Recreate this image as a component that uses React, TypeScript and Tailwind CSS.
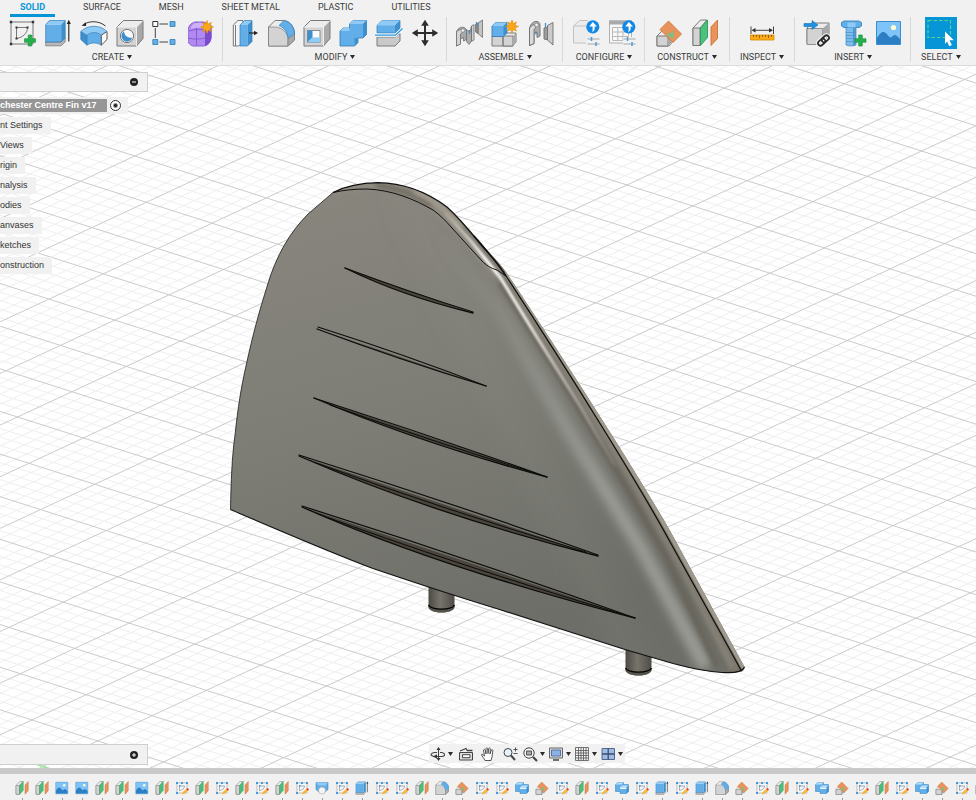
import type { ReactNode } from "react";

type IconProps = { className?: string };

const BLUE = "#62aee8";
const BLUE_TOP = "#8fcbf5";
const BLUE_SIDE = "#3d8fcd";
const BLUE_LINE = "#2f7cb8";
const GREY = "#d3d3d3";
const GREY_TOP = "#ececec";
const GREY_SIDE = "#a9a9a9";
const GREY_LINE = "#7a7a7a";

function Svg({ className = "size-7", children }: IconProps & { children: ReactNode }) {
  return (
    <svg viewBox="0 0 28 28" className={className} fill="none" aria-hidden="true">
      {children}
    </svg>
  );
}

function Burst({ x, y }: { x: number; y: number }) {
  return (
    <path
      transform={`translate(${x} ${y})`}
      d="M0-6.5 1.3-3 4.4-4.6 3-1.3 6.5 0 3 1.3 4.4 4.6 1.3 3 0 6.5-1.3 3-4.4 4.6-3 1.3-6.5 0-3-1.3-4.4-4.6-1.3-3Z"
      fill="#f9a61a"
      stroke="#e08a00"
      strokeWidth=".6"
    />
  );
}

function Plus({ x, y }: { x: number; y: number }) {
  return (
    <path
      transform={`translate(${x} ${y})`}
      d="M-1.8-5.5h3.6v3.7h3.7v3.6H1.8v3.7h-3.6V1.8h-3.7v-3.6h3.7Z"
      fill="#23b14d"
      stroke="#168a38"
      strokeWidth=".6"
    />
  );
}

function SketchIcon(props: IconProps) {
  return (
    <Svg {...props}>
      <path d="M3 3h22v22H3Z" stroke="#6a6a6a" strokeWidth=".9" />
      <path d="M8.500 8.500h11C19.500 14 15 18.500 8.500 19.500Z" stroke="#6a6a6a" strokeWidth=".9" />
      <path
        d="M1.800 1.800h2.400v2.400H1.800ZM23.800 1.800h2.400v2.400h-2.400ZM1.800 23.800h2.400v2.400H1.800ZM7.500 7.500h2v2h-2ZM18.500 7.500h2v2h-2ZM7.500 18.500h2v2h-2Z"
        fill="#333"
      />
      <Plus x={22} y={21.5} />
    </Svg>
  );
}

function ExtrudeIcon(props: IconProps) {
  return (
    <Svg {...props}>
      <path d="M1.700 23h15.500l4-4v3.800l-4 4H1.700Z" fill="#b9b9b9" stroke={GREY_LINE} strokeWidth=".8" />
      <path d="M1.700 5.500h15.500v17.500H1.700Z" fill={BLUE} />
      <path d="M1.700 5.500 5.500 1.500h15.700l-4 4Z" fill={BLUE_TOP} />
      <path d="m17.200 5.500 4-4V19l-4 4Z" fill={BLUE_SIDE} />
      <path d="M1.700 5.500 5.500 1.500h15.700V19l-4 4H1.700Z" stroke={BLUE_LINE} strokeWidth=".7" />
      <path d="M24.800 4v18.500" stroke="#222" strokeWidth="1.100" />
      <path d="m24.800 .8 2 4.200h-4Z" fill="#222" />
    </Svg>
  );
}

function RevolveIcon(props: IconProps) {
  return (
    <Svg {...props}>
      <path d="M.8 12.500C8 5.500 20 5.500 27 12.500l-5.700 3.700c-4-3.500-10.300-3.500-14.300 0Z" fill={BLUE_TOP} />
      <path d="M7 16.200c4-3.500 10.300-3.500 14.300 0v10c-4-3-10.300-3-14.300 0Z" fill={BLUE} />
      <path d="m.8 12.500 6.200 3.700v10L.8 20.500Z" fill={BLUE_SIDE} />
      <path d="M27 12.500v8l-5.700 5.700v-10Z" fill="#fafafa" stroke="#444" strokeWidth=".9" />
      <path
        d="M27 12.500C20 5.500 8 5.500.8 12.500v8L7 26.200c4-3 10.300-3 14.300 0M.8 12.500 7 16.200v10M7 16.200c4-3.500 10.300-3.500 14.300 0"
        stroke={BLUE_LINE}
        strokeWidth=".7"
      />
      <path d="M25.500 7C19 1.700 10 1.700 4.500 5" stroke="#333" />
      <path d="m1.500 6.800 4.300-3.500.4 3.700Z" fill="#222" />
    </Svg>
  );
}

function GreyCube({ children }: { children?: ReactNode }) {
  return (
    <>
      <path d="m1 8 6.500-6.500H27L20.500 8Z" fill={GREY_TOP} />
      <path d="M20.500 8 27 1.500v18L20.500 27Z" fill={GREY_SIDE} />
      <path d="M1 8h19.500v19H1Z" fill={GREY} />
      <path d="M1 8 7.500 1.500H27v18L20.500 27H1Z" stroke={GREY_LINE} />
      <path d="M1 8h19.500v19M20.500 8 27 1.500" stroke="#f6f6f6" strokeWidth=".8" />
      {children}
    </>
  );
}

function HoleIcon(props: IconProps) {
  return (
    <Svg {...props}>
      <GreyCube>
        <circle cx="11" cy="17" r="6.600" fill="#fafafa" stroke="#777" />
        <path d="M8 12.300a5.600 5.600 0 1 0 8.400 6.200C11.500 19.500 8.300 16.500 8 12.300Z" fill={BLUE_SIDE} />
      </GreyCube>
    </Svg>
  );
}

function PatternIcon(props: IconProps) {
  return (
    <Svg {...props}>
      <path d="M7.500 5h8.500M3.300 9v10M7.500 23h8.500" stroke="#444" />
      <path d="M.8 2.500h5v5h-5Z" fill="#fff" stroke="#333" />
      <path d="M18 2.500h5v5h-5ZM.8 20.500h5v5h-5ZM18 20.500h5v5h-5Z" fill={BLUE} stroke={BLUE_LINE} strokeWidth=".8" />
    </Svg>
  );
}

function FormIcon(props: IconProps) {
  return (
    <Svg {...props}>
      <path d="M7 3h9l7 4v11c0 5-3 9-8 9H6c-4 0-6-3-6-7v-8c0-5 3-8 7-9Z" fill="#b08af0" stroke="#8a62d2" />
      <path d="M17 11c3-1 5-3 6.500-5v13c-1 4-3.500 7-6.500 8Z" fill="#7d4bd0" />
      <path d="M1 12c5-2 11-2 16-1M0 19c6 1.500 12 1.500 17 0l6-3M8.500 10.500v16M9 3C7 5 8 8 8.500 10.500" stroke="#7d50cc" strokeWidth=".8" />
      <path d="M6 4.500c4-1.500 9-1 12 1l-3 4c-3-1-8-1-12 .5C3 7.500 4 5.500 6 4.500Z" fill="#cdb2fa" />
      <Burst x={19} y={8} />
    </Svg>
  );
}

function PressPullIcon(props: IconProps) {
  return (
    <Svg {...props}>
      <path d="M2.300 6 7 1.500h5V23l-4 4H2.300Z" fill="#f4f4f4" stroke={GREY_LINE} />
      <path d="M4.500 6v21" stroke={GREY_LINE} />
      <path d="M9 6h7.500v21H9Z" fill={BLUE} />
      <path d="m9 6 4.500-4.500H21L16.500 6Z" fill={BLUE_TOP} />
      <path d="M16.500 6 21 1.500V22.500L16.500 27Z" fill={BLUE_SIDE} />
      <path d="M9 6 13.500 1.500H21v21L16.500 27H9Z" stroke={BLUE_LINE} strokeWidth=".7" />
      <path d="M18 14h6" stroke="#222" strokeWidth="1.200" />
      <path d="m27 14-4 2.200v-4.400Z" fill="#222" />
    </Svg>
  );
}

function FilletIcon(props: IconProps) {
  return (
    <Svg {...props}>
      <path d="M1.500 8 8 1.500h7c7 0 12 5 12.500 12.500v7L21 27H1.500Z" fill={GREY_TOP} stroke={GREY_LINE} />
      <path d="M1.500 8h6C15 8 21 14 21 20v7H1.500Z" fill={GREY} stroke={GREY_LINE} strokeWidth=".7" />
      <path d="m21 20 6.500-4.500V21L21 27Z" fill={GREY_SIDE} stroke={GREY_LINE} strokeWidth=".7" />
      <path d="m12 6.500 5-5c6 1 10 6 10.500 13L21 19c-.5-6-4-10.500-9-12.500Z" fill={BLUE} stroke={BLUE_LINE} strokeWidth=".7" />
    </Svg>
  );
}

function ShellIcon(props: IconProps) {
  return (
    <Svg {...props}>
      <GreyCube>
        <path d="M4.500 11.500H17v12H4.500Z" fill="#fafafa" stroke="#777" strokeWidth=".8" />
        <path d="M4.500 11.500H9.500v7l-5 5Z" fill={BLUE_SIDE} />
        <path d="m4.500 23.500 5-5H17v5Z" fill={BLUE_TOP} />
      </GreyCube>
    </Svg>
  );
}

function CombineIcon(props: IconProps) {
  return (
    <Svg {...props}>
      <path d="m1 12 3-3h6.500V5L14 1.500h13.500v14L24 19h-5v4.500L15.500 27H1Z" fill={BLUE} stroke={BLUE_LINE} strokeWidth=".8" />
      <path d="m1 12 3-3h6.500v3ZM10.500 5 14 1.500h13.500L24 5Z" fill={BLUE_TOP} />
      <path d="m24 5 3.500-3.500v14L24 19ZM15.500 19H19v4.500L15.500 27Z" fill={BLUE_SIDE} />
    </Svg>
  );
}

function SplitIcon(props: IconProps) {
  return (
    <Svg {...props}>
      <path d="M2 18h18l5-3.500V22l-5 5H2Z" fill="#c9c9c9" stroke={GREY_LINE} />
      <path d="M2 6.500 7 1.500h18v8l-5 4.500H2Z" fill={BLUE} stroke={BLUE_LINE} strokeWidth=".7" />
      <path d="m2 6.500 5-5h18l-5 5Z" fill={BLUE_TOP} />
      <path d="m20 6.500 5-5v8L20 14Z" fill={BLUE_SIDE} />
      <path d="M0 16.200h20.500L27.500 9.500" stroke="#fff" strokeWidth="3" />
      <path d="M0 16.200h20.500L27.500 9.500" stroke="#2196e3" strokeWidth="1.300" />
    </Svg>
  );
}

function MoveIcon(props: IconProps) {
  return (
    <Svg {...props}>
      <path d="M14 4v20M4 14h20" stroke="#2d2d2d" strokeWidth="2" />
      <path d="m14 .8 3.800 6h-7.600ZM14 27.200l3.800-6h-7.600ZM.8 14l6-3.800v7.600ZM27.200 14l-6-3.800v7.600Z" fill="#2d2d2d" />
    </Svg>
  );
}

function JointIcon(props: IconProps) {
  return (
    <Svg {...props}>
      <g stroke="#6e6e6e" strokeWidth=".8" strokeLinejoin="round">
        <path d="m23 4 4.500-3v17.500L23 14.500Z" fill="#c4c4c4" />
        <path d="m20.500 5.500 2.500-1.500v10.500L20.500 13Z" fill="#8f8f8f" />
        <path d="m16.500 7 2.500-1.500v15.500l-2.500 1.500Z" fill="#cfcfcf" />
        <path d="M11.500 10.500 15 13l1.500-6v15L14 25.500l-2.500-3Z" fill="#adadad" />
        <path d="M1.500 12.500C3 9 6 7.500 9 8.500c1.500.5 2.500 2 2.500 4v8L8.500 22v-3.500l-3 1.500v5L1.500 27Z" fill="#a9a9a9" />
        <path d="M1.500 12.500 5 10.500c1.500-.5 3 .5 3 2.500l-2.500 2V25l-4 2Z" fill="#d4d4d4" />
      </g>
      <circle cx="7.800" cy="11.500" r="1.700" fill="#f2f2f2" stroke="#777" strokeWidth=".6" />
      <path d="M14.500 11v4M21.500 3v3.500" stroke={BLUE_SIDE} strokeWidth="1.300" />
    </Svg>
  );
}

function NewComponentIcon(props: IconProps) {
  return (
    <Svg {...props}>
      <path d="m12 17 3-3h10v9l-3.500 4H12Z" fill={GREY_TOP} stroke={GREY_LINE} />
      <path d="M1 17h11v10H1ZM12 17h10v10H12Z" fill={GREY} stroke={GREY_LINE} />
      <path d="m22 17 3-3v9l-3 4Z" fill={GREY_SIDE} />
      <path d="m1 7 3.500-3.500h11.500V14l-3.500 3.500H1Z" fill={BLUE} stroke={BLUE_LINE} strokeWidth=".8" />
      <path d="m1 7 3.500-3.500H16L12.500 7Z" fill={BLUE_TOP} />
      <path d="M12.500 7 16 3.500V14l-3.500 3.500Z" fill={BLUE_SIDE} />
      <Burst x={21} y={7.5} />
    </Svg>
  );
}

function AsBuiltJointIcon(props: IconProps) {
  return (
    <Svg {...props}>
      <g stroke="#6e6e6e" strokeWidth=".9" strokeLinejoin="round">
        <path d="M2.500 9C4 4 7 2 10 2.500c2 .5 3 1.500 3 3.500v11l-3 1.500V13l-3 1.500v10l-4.500 2Z" fill="#adadad" />
        <path d="M2.500 9 5 6.500c2-1.500 3.500 0 3.500 2L7 11v13.500l-4.500 2Z" fill="#dadada" />
        <path d="m17 9 4.500-1v13L17 20Z" fill="#9d9d9d" />
        <path d="m20.500 6.500 5.500-3v22.500l-5.500-5Z" fill="#cbcbcb" />
      </g>
      <circle cx="9.500" cy="6" r="1.800" fill="#f2f2f2" stroke="#777" strokeWidth=".6" />
      <path d="M9 12.500v3M18.500 4v4" stroke={BLUE_SIDE} strokeWidth="1.300" />
    </Svg>
  );
}

function UpdateBadge() {
  return (
    <>
      <circle cx="20.800" cy="7.800" r="6.600" fill="#1388e5" />
      <path d="M20.800 3 25 7.500h-2.400v2.500c0 1.500-1 2.500-2.600 2.800.7-1.300.6-2 .6-2.800V7.500h-3.300Z" fill="#fff" />
    </>
  );
}

function Sliders() {
  return (
    <>
      <path d="M15.500 20h12M15.500 25h12" stroke="#a5a5a5" />
      <path d="M19.500 18v4M24 23v4" stroke="#4a9ddb" strokeWidth="1.500" />
    </>
  );
}

function ConfigureIcon(props: IconProps) {
  return (
    <Svg {...props}>
      <path d="m1.500 7 6-5.500H20V7l-1 8v5H13v4H1.500Z" fill="#ececec" />
      <path d="M14 24H1.500V7l6-5.500H16M1.500 7H14" stroke="#c2c2c2" />
      <Sliders />
      <UpdateBadge />
    </Svg>
  );
}

function ConfigTableIcon(props: IconProps) {
  return (
    <Svg {...props}>
      <path d="M1.500 2h22v22h-22Z" fill="#f8f8f8" stroke="#b0b0b0" />
      <path d="M1 1.500h23v4H1Z" fill="#a9a9a9" />
      <path d="M4.500 8.500h16v13h-16ZM4.500 13h16M4.500 17.500h16M9.800 8.500v13M15 8.500v13" stroke="#b9b9b9" />
      <path d="M15 18h13v10H15Z" fill="#f2f2f2" />
      <Sliders />
      <UpdateBadge />
    </Svg>
  );
}

function AnglePlaneIcon(props: IconProps) {
  return (
    <Svg {...props}>
      <path d="m2 17 5-5h12v9l-5 6H2Z" fill={GREY_TOP} stroke={GREY_LINE} />
      <path d="M2 17h11v10H2Z" fill={GREY} stroke={GREY_LINE} />
      <path d="m13 17 6-5v9l-6 6Z" fill={GREY_SIDE} />
      <path d="M13.500 2 26.500 15 18 23.500 5 10.500Z" fill="#e8935c" stroke="#cf7137" strokeWidth=".8" />
      <path d="m13 17 5.500-5.500v8.500l-5.500-3ZM11 17l4-4v4Z" fill="#64c98a" fillOpacity=".8" />
    </Svg>
  );
}

function OffsetPlaneIcon(props: IconProps) {
  return (
    <Svg {...props}>
      <path d="m2 9 7.500-8H16L9 9v17.500H2Z" fill={GREY_TOP} stroke={GREY_LINE} />
      <path d="M2 9h7v17.500H2Z" fill={GREY} stroke={GREY_LINE} />
      <path d="m9.500 9 7-8v17.500l-7 8Z" fill="#4cc07c" stroke="#2e9a5b" strokeWidth=".9" />
      <path d="m20 8 6.500-7v18.500L20 26.500Z" fill="#e8935c" stroke="#cf7137" strokeWidth=".9" />
    </Svg>
  );
}

function MeasureIcon(props: IconProps) {
  return (
    <Svg {...props}>
      <path d="M3 7.500V15M25.500 7.500V15M5 11.300h18.500" stroke="#444" />
      <path d="m3.500 11.300 4-2.300v4.600ZM25 11.300 21 9v4.600Z" fill="#333" />
      <path d="M2.500 16h23.500v5H2.500Z" fill="#fbab18" stroke="#d98a00" strokeWidth=".8" />
      <path d="M5.500 16v2M8.500 16v2M11.500 16v3M14.500 16v2M17.500 16v2M20.500 16v3M23.500 16v2" stroke="#7c5200" strokeWidth=".8" />
    </Svg>
  );
}

function DeriveIcon(props: IconProps) {
  return (
    <Svg {...props}>
      <path d="m4 9 5-5h17v14l-6 6.500H4Z" fill={GREY_TOP} stroke={GREY_LINE} />
      <path d="M4 9.500h15.500v16H4Z" fill={GREY} stroke={GREY_LINE} strokeWidth=".8" />
      <path d="M19.500 9.500 26 4v14l-6.500 7Z" fill={GREY_SIDE} />
      <path d="M1 4.500h8V1.500l6 4.500-6 4.500V7.500H1Z" fill="#2091e0" stroke="#1273b9" strokeWidth=".6" />
      <g transform="rotate(-42 20.500 21.500)" stroke="#f4f4f4" strokeWidth="4">
        <rect x="14" y="19" width="8" height="5" rx="2.500" />
        <rect x="19" y="19" width="8" height="5" rx="2.500" />
      </g>
      <g transform="rotate(-42 20.500 21.500)" stroke="#2a2a2a" strokeWidth="1.800">
        <rect x="14" y="19" width="8" height="5" rx="2.500" />
        <rect x="19" y="19" width="8" height="5" rx="2.500" />
      </g>
    </Svg>
  );
}

function FastenerIcon(props: IconProps) {
  return (
    <Svg {...props}>
      <path d="M7 8h10v18c-3 1.300-7 1.300-10 0Z" fill="#7cbcec" stroke="#3f86be" strokeWidth=".7" />
      <path d="M14 8h3v18l-3 .8Z" fill="#4e97d1" />
      <path d="M7 13.500h10M7 16.500h10M7 19.500h10M7 22.500h10" stroke="#4b8fc6" strokeWidth=".7" />
      <path d="M2.500 3.500 5 2h15l2.500 1.500V7L20 8.500H5L2.500 7Z" fill={BLUE} stroke={BLUE_LINE} strokeWidth=".8" />
      <path d="M8.500 3.500h8v5h-8Z" fill={BLUE_TOP} />
      <Plus x={21.5} y={21.5} />
    </Svg>
  );
}

function CanvasIcon(props: IconProps) {
  return (
    <Svg {...props}>
      <path d="M1.500 2.500h24v23h-24Z" fill="#7fc4f8" stroke="#3b8ccc" />
      <path d="M2 19c3-5 5-6.500 7-6 3 1 4.500 5 6.500 5.500 1.500 0 2.500-2.500 4-2.500 2 0 3.500 2 5.500 4v5H2Z" fill="#2c7fc2" />
      <circle cx="18.500" cy="8.500" r="2.600" fill="#fffbd0" />
    </Svg>
  );
}

function SelectIcon() {
  return (
    <svg viewBox="0 0 32 32" className="size-8" fill="none" aria-hidden="true">
      <path d="M0 0h32v32H0Z" fill="#0696d7" />
      <path d="M3 3.500h22.500v17H3Z" stroke="#53d68b" strokeWidth="1.200" strokeDasharray="3.500 2" />
      <path d="m20 14.500 8.800 8.800h-4.300l2.400 4.700-2.600 1.300-2.200-4.700L20 27Z" fill="#fff" />
    </svg>
  );
}

function EditSketchIcon(props: IconProps) {
  return (
    <Svg {...props}>
      <path d="M4 4h20v20H4Z" fill="#f6fafd" stroke="#9a9a9a" strokeWidth="1.200" />
      <path d="M9 10h10c0 5-4 8-10 9Z" stroke="#777" strokeWidth="1.200" />
      <path d="M2 2h4v4H2ZM22 2h4v4h-4ZM2 22h4v4H2ZM12 2h4v4h-4ZM8 8h3v3H8Z" fill="#4298d8" />
      <path d="m14 27 1.500-5 8-7 3.500 3.500-8 7Z" fill="#fbb62d" />
      <path d="m22.500 16 2.500-2 3 3-2.500 2.500Z" fill="#e33" />
    </Svg>
  );
}

function LoftCutIcon(props: IconProps) {
  return (
    <Svg {...props}>
      <path d="M2 3h24v14l-6 5H8l-6-5Z" fill={BLUE} stroke={BLUE_LINE} />
      <path d="M2 3h24l-5 6H7Z" fill={BLUE_TOP} />
      <circle cx="14" cy="19" r="7" fill="#f4f4f4" stroke="#999" />
    </Svg>
  );
}

function CombineFeatureIcon(props: IconProps) {
  return (
    <Svg {...props}>
      <path d="m1 7 4-4h12v4h10v14l-4 4H10v-4H1Z" fill={BLUE} stroke={BLUE_LINE} />
      <path d="m1 7 4-4h12l-4 4ZM10 13l4-4h13l-4 4Z" fill="#b5defa" />
      <path d="m23 13 4-4v12l-4 4Z" fill={BLUE_SIDE} />
      <path d="M10 13h13v3H10Z" fill="#e9f5fd" />
    </Svg>
  );
}

function Caret() {
  return (
    <svg viewBox="0 0 5 4" className="h-1 w-[5px] shrink-0" aria-hidden="true">
      <path d="M0 0h5L2.500 4Z" fill="#2b2b2b" />
    </svg>
  );
}

type Tool = { name: string; icon: ReactNode };
type ToolGroup = { label: string; className: string; tools: Tool[] };

const TABS = ["SOLID", "SURFACE", "MESH", "SHEET METAL", "PLASTIC", "UTILITIES"];

const GROUPS: ToolGroup[] = [
  {
    label: "CREATE",
    className: "border-r pr-0.5 pl-1",
    tools: [
      { name: "Create Sketch", icon: <SketchIcon /> },
      { name: "Extrude", icon: <ExtrudeIcon /> },
      { name: "Revolve", icon: <RevolveIcon /> },
      { name: "Hole", icon: <HoleIcon /> },
      { name: "Pattern", icon: <PatternIcon /> },
      { name: "Create Form", icon: <FormIcon /> },
    ],
  },
  {
    label: "MODIFY",
    className: "border-r pr-[3px] pl-1",
    tools: [
      { name: "Press Pull", icon: <PressPullIcon /> },
      { name: "Fillet", icon: <FilletIcon /> },
      { name: "Shell", icon: <ShellIcon /> },
      { name: "Combine", icon: <CombineIcon /> },
      { name: "Split Body", icon: <SplitIcon /> },
      { name: "Move", icon: <MoveIcon /> },
    ],
  },
  {
    label: "ASSEMBLE",
    className: "border-r pr-[3px] pl-1",
    tools: [
      { name: "Joint", icon: <JointIcon /> },
      { name: "New Component", icon: <NewComponentIcon /> },
      { name: "As-built Joint", icon: <AsBuiltJointIcon /> },
    ],
  },
  {
    label: "CONFIGURE",
    className: "border-r pr-1 pl-[5px]",
    tools: [
      { name: "Configure Design", icon: <ConfigureIcon /> },
      { name: "Configuration Table", icon: <ConfigTableIcon /> },
    ],
  },
  {
    label: "CONSTRUCT",
    className: "border-r px-1.5",
    tools: [
      { name: "Plane at Angle", icon: <AnglePlaneIcon /> },
      { name: "Offset Plane", icon: <OffsetPlaneIcon /> },
    ],
  },
  {
    label: "INSPECT",
    className: "border-r px-2.5",
    tools: [{ name: "Measure", icon: <MeasureIcon /> }],
  },
  {
    label: "INSERT",
    className: "border-r pr-[3px] pl-1",
    tools: [
      { name: "Derive", icon: <DeriveIcon /> },
      { name: "Insert Fastener", icon: <FastenerIcon /> },
      { name: "Canvas", icon: <CanvasIcon /> },
    ],
  },
  {
    label: "SELECT",
    className: "px-2.5",
    tools: [{ name: "Select", icon: <SelectIcon /> }],
  },
];

function Toolbar() {
  return (
    <header className="shrink-0 border-b border-[#dcdcdc] bg-[#f1f1f1] font-['Roboto',sans-serif] text-[9px] text-[#3c3c3c]">
      <nav className="flex h-[17px] gap-[18px] pl-2.5">
        {TABS.map((tab, index) => (
          <button
            key={tab}
            type="button"
            className={
              index === 0
                ? "border-b-[3px] border-[#0696d7] px-2.5 leading-[14px] font-bold text-[#0696d7]"
                : "border-b-[3px] border-transparent px-2.5 leading-[14px]"
            }
          >
            {tab}
          </button>
        ))}
      </nav>
      <div className="flex pb-[3px]">
        {GROUPS.map((group) => (
          <section key={group.label} className={`flex flex-col items-center border-[#d9d9d9] ${group.className}`}>
            <div className="flex h-8">
              {group.tools.map((tool) => (
                <button
                  key={tool.name}
                  type="button"
                  aria-label={tool.name}
                  className="flex w-9 items-center justify-center"
                >
                  {tool.icon}
                </button>
              ))}
            </div>
            <button type="button" className="flex h-[13px] items-center gap-[3px] pt-[3px] leading-none whitespace-nowrap">
              {group.label}
              <Caret />
            </button>
          </section>
        ))}
      </div>
    </header>
  );
}

// Ground plane: one cell is spanned by U and V, with five minor steps per cell.
const ORIGIN = [69, 69];
const U = [65.81, 20.98];
const V = [54.36, -25.3];

function gridLines(major: boolean) {
  const reach = 60;
  let d = "";
  for (let k = -200; k <= 200; k++) {
    if ((k % 5 === 0) !== major) continue;
    const s = k / 5;
    for (const [step, dir] of [
      [V, U],
      [U, V],
    ]) {
      const x = ORIGIN[0] + s * step[0];
      const y = ORIGIN[1] + s * step[1];
      d += `M${(x - reach * dir[0]).toFixed(1)} ${(y - reach * dir[1]).toFixed(1)}`;
      d += `L${(x + reach * dir[0]).toFixed(1)} ${(y + reach * dir[1]).toFixed(1)}`;
    }
  }
  return d;
}

const MINOR_GRID = gridLines(false);
const MAJOR_GRID = gridLines(true);

const BODY =
  "M230.500 509.500C231 482 232 456 235 435C238 407 241 388 246 366C253 334 259 312 267.500 285C276 256 290 232 308 214L333 192.500C346 186 362 183 378 182.700C402 183 424 190 447 207C458 217 470 230 480 241.500C490 254 499 262 506 272C577 379 646 487 675 540L744.500 667C744 670 743 671 741.500 671.500C736 673 730 673 722 672.500C704 671.500 690 668 673 663.500L625 649.500C582 636 540 622 498 609C452 595 410 581 373 568.500C322 549 276 529 230.500 509.500Z";

const CAP_EDGE =
  "M333 192.500C344 190 355 189 367 189C392 190 414 199 433 210C440 215 446 221 452 228L482 261C486 265 490 268 497 270L506 276";

const SLOTS = [
  { top: "M345 268Q406 291 473 312", bottom: "M345 268Q402 296 473 313" },
  { top: "M318 327Q406 355 486 386", bottom: "M317 329Q400 360 486 386" },
  { top: "M314 398Q432 436 547 477", bottom: "M314 398Q420 443 547 477", mid: "M330 405Q428 440 538 474" },
  { top: "M299 455Q452 503 598 555", bottom: "M299 456Q432 514 598 556", mid: "M316 463Q442 509 586 552" },
  { top: "M302 506Q470 559 635 618", bottom: "M302 507Q440 568 635 618", mid: "M318 514Q454 564 622 614" },
];

function Peg({ x, y }: { x: number; y: number }) {
  return (
    <g transform={`translate(${x} ${y})`}>
      <path d="M-13 0V20C-12 25-6 26.500 0 26.500S12 25 13 20V0Z" fill="url(#peg)" />
      <path d="M-13 19C-10 24.500 10 24.500 13 19V22C10 28 -10 28-13 22Z" fill="#56534d" />
      <path d="M-13 19C-10 24.500 10 24.500 13 19" stroke="#000" strokeWidth="1.400" fill="none" />
    </g>
  );
}

function Fin() {
  return (
    <g transform="translate(0 -66)">
      <Peg x={441.5} y={586} />
      <Peg x={638.5} y={649} />
      <path d={BODY} fill="url(#face)" />
      <g clipPath="url(#body)" fill="none">
        <path d="M405 190L498 400L650 690" stroke="#93948c" strokeWidth="26" strokeOpacity=".12" filter="url(#soft-wide)" />
        <path d="M437 232L500 312L568 430L640 546L706 668" stroke="url(#sheen)" strokeWidth="14" filter="url(#soft)" />
        <path d="M456 218L494 266L560 368L622 468L682 568L734 680L755 690L755 640L506 270L450 208Z" fill="#7a766c" filter="url(#soft-thin)" />
        <path d="M500 282L560 378L622 480L666 556L717 666" stroke="#69655c" strokeWidth="6" filter="url(#soft-thin)" />
        <path d="M514 290L572 380L632 480L680 566L733 668" stroke="#8b857a" strokeWidth="4" filter="url(#soft-thin)" />
        <path d="M335 192C350 186 372 184 395 188C422 196 446 217 462 235L498 276" stroke="#8f8b81" strokeWidth="7" filter="url(#soft-thin)" />
        <path d="M376 185C396 188 415 194 432 206" stroke="#625c51" strokeWidth="3" filter="url(#soft-thin)" />
        <path d="M414 191C434 200 451 214 462 228" stroke="#aba293" strokeWidth="4" filter="url(#soft-thin)" />
        <path d="M445 213L470 240L500 277L535 334L580 406L615 466" stroke="url(#glint)" strokeWidth="3" filter="url(#soft-line)" />
        <path d="M506 272C577 379 646 487 675 540L746 669" stroke="#a09a8e" strokeWidth="7" />
      </g>
      <g fill="none" stroke="#111">
        <path d="M333 192.500L308 214C290 232 276 256 267.500 285C259 312 253 334 246 366C241 388 238 407 235 435C232 456 231 482 230.500 509.500" strokeOpacity=".75" />
        <path d="M230.500 509.500C276 529 322 549 373 568.500C410 581 452 595 498 609C540 622 582 636 625 649.500L673 663.500C690 668 704 671.500 722 672.500C730 673 742 673 744.500 667" strokeWidth="1.200" />
        <path d="M333 192.500C346 186 362 183 378 182.700C402 183 424 190 447 207C458 217 469 230 479 242.500L498 264L506 276" strokeWidth="1.200" />
        <path d="M474 236C485 249 497 262 506 276" strokeWidth="1.400" />
        <path d={CAP_EDGE} />
        <path d="M506 276C575 381 640 487 669 540C690 578 717 626 741.500 671" strokeWidth="1.300" />
      </g>
      {SLOTS.map((slot) => (
        <g key={slot.top} fill="none" stroke="#0c0c0a" strokeLinecap="round">
          <path d={slot.bottom} strokeWidth="1.300" fill="#4b463d" />
          {slot.mid && <path d={slot.mid} />}
          <path d={slot.top} strokeWidth="1.200" />
        </g>
      ))}
    </g>
  );
}

function Scene() {
  return (
    <svg className="absolute inset-0 size-full" aria-hidden="true">
      <defs>
        <linearGradient id="face" gradientUnits="userSpaceOnUse" x1="340" y1="190" x2="460" y2="640">
          <stop offset="0" stopColor="#88857d" />
          <stop offset=".5" stopColor="#7d7d76" />
          <stop offset="1" stopColor="#6d6e67" />
        </linearGradient>
        <linearGradient id="peg">
          <stop offset="0" stopColor="#4c4943" />
          <stop offset=".45" stopColor="#77746c" />
          <stop offset="1" stopColor="#4f4c46" />
        </linearGradient>
        <linearGradient id="sheen" gradientUnits="userSpaceOnUse" x1="437" y1="232" x2="706" y2="668">
          <stop offset="0" stopColor="#a3a49e" stopOpacity="0" />
          <stop offset=".25" stopColor="#a3a49e" stopOpacity=".3" />
          <stop offset=".6" stopColor="#a3a49e" stopOpacity=".8" />
          <stop offset="1" stopColor="#a8a9a3" stopOpacity=".8" />
        </linearGradient>
        <linearGradient id="glint" gradientUnits="userSpaceOnUse" x1="445" y1="213" x2="615" y2="466">
          <stop offset="0" stopColor="#cfcabf" stopOpacity=".3" />
          <stop offset=".2" stopColor="#fff" />
          <stop offset=".45" stopColor="#f1eee8" />
          <stop offset="1" stopColor="#b5b0a6" stopOpacity=".2" />
        </linearGradient>
        <clipPath id="body">
          <path d={BODY} />
        </clipPath>
        <filter id="soft-wide" x="-50%" y="-50%" width="200%" height="200%">
          <feGaussianBlur stdDeviation="12" />
        </filter>
        <filter id="soft" x="-20%" y="-20%" width="140%" height="140%">
          <feGaussianBlur stdDeviation="5" />
        </filter>
        <filter id="soft-thin" x="-20%" y="-20%" width="140%" height="140%">
          <feGaussianBlur stdDeviation="2" />
        </filter>
        <filter id="soft-line" x="-20%" y="-20%" width="140%" height="140%">
          <feGaussianBlur stdDeviation=".8" />
        </filter>
      </defs>
      <path d={MINOR_GRID} stroke="#efefef" />
      <path d={MAJOR_GRID} stroke="#cbcbcb" />
      <path d="M36 698L49 703" stroke="#8fe88f" strokeWidth="1.500" />
      <Fin />
    </svg>
  );
}

const TREE = ["nt Settings", "Views", "rigin", "nalysis", "odies", "anvases", "ketches", "onstruction"];

function RoundToggle({ open, label }: { open: boolean; label: string }) {
  return (
    <button type="button" aria-label={label}>
      <svg viewBox="0 0 8 8" className="size-2" aria-hidden="true">
        <circle cx="4" cy="4" r="4" fill="#222" />
        <path d={open ? "M2 4h4" : "M2 4h4M4 2v4"} stroke="#fff" />
      </svg>
    </button>
  );
}

function BrowserTree() {
  return (
    <aside className="absolute top-1.5 left-0 text-[9px] text-[#333]">
      <div className="flex h-5 w-[148px] items-center justify-end border border-l-0 border-[#cfcfcf] bg-[#f1f1f1] pr-[9px]">
        <RoundToggle open label="Collapse browser" />
      </div>
      <div className="mt-[5px] flex h-[17px] w-32 items-center bg-[#f1f1f1]">
        <span className="h-[13px] w-[107px] bg-[#969696] leading-[13px] font-bold whitespace-nowrap text-white">
          chester Centre Fin v17
        </span>
        <input
          type="radio"
          name="active-component"
          aria-label="Activate component"
          defaultChecked
          className="ml-[3px] size-[11px] appearance-none rounded-full border border-[#333] bg-[radial-gradient(circle,#222_0_1px,#fff_3px)]"
        />
      </div>
      <ul className="mt-[3px] flex flex-col items-start gap-[3px]">
        {TREE.map((name) => (
          <li key={name} className="h-[17px] bg-[#f1f1f1] pr-2 leading-[17px] whitespace-nowrap">
            {name}
          </li>
        ))}
      </ul>
    </aside>
  );
}

function NavSvg({ children }: { children: ReactNode }) {
  return (
    <svg viewBox="0 0 16 16" className="size-4 shrink-0" fill="none" stroke="#444" aria-hidden="true">
      {children}
    </svg>
  );
}

const NAV_TOOLS: (Tool & { menu?: boolean })[] = [
  {
    name: "Orbit",
    menu: true,
    icon: (
      <NavSvg>
        <path d="M8.500 2v12M7 6.500H5C.5 7-.5 9.500 4 10.500h8c3.500-.5 3.500-3 0-4h-2" strokeWidth="1.100" />
        <path d="M8.500 1 6.500 4h4ZM8.500 15l-2-3h4ZM3 10.500l4-2.200v4.400Z" fill="#333" stroke="none" />
      </NavSvg>
    ),
  },
  {
    name: "Look At",
    icon: (
      <NavSvg>
        <path d="M1.500 6.500h13v7.500h-13Z" fill="#ddd" />
        <path d="M4.500 8.700h7.500v3H4.500Z" fill="#fff" />
        <path d="M2 5 8 2.500l1 2M9 4.500h5.500" strokeWidth="1.300" />
      </NavSvg>
    ),
  },
  {
    name: "Pan",
    icon: (
      <NavSvg>
        <path
          d="M5 14.500C4 12 2 10.500 1.500 8.500c.8-.8 1.800 0 3 1.700L3.500 4c.8-1 1.600-.5 1.800.5L6 8 6 2.500c.5-1 1.600-.8 1.700.2L8 7.500l.7-5c.7-1 1.700-.4 1.600.5L10 8l1.300-4c1-.8 1.700 0 1.500 1L12 11l-1 3.500Z"
          fill="#fff"
          strokeWidth=".9"
        />
      </NavSvg>
    ),
  },
  {
    name: "Zoom",
    icon: (
      <NavSvg>
        <circle cx="6" cy="6.500" r="4" fill="#e8f1fa" />
        <path d="m9 9.500 4 4.500" strokeWidth="2" />
        <path d="M11.500 3.500h4M13.500 1.500v4M11.500 7.500h4" strokeWidth=".9" />
      </NavSvg>
    ),
  },
  {
    name: "Fit",
    menu: true,
    icon: (
      <NavSvg>
        <circle cx="7" cy="7" r="5.200" fill="#f6f6f6" />
        <path d="M4.500 5h5v4h-5Z" fill="#aaa" strokeWidth=".9" />
        <path d="m11 11 4 4" strokeWidth="2.200" />
      </NavSvg>
    ),
  },
  {
    name: "Display Settings",
    menu: true,
    icon: (
      <NavSvg>
        <path d="M1.500 2h13v10h-13Z" fill="#ddd" stroke="#666" />
        <path d="M3.500 4h9v6h-9Z" fill="#8fb2e6" stroke="#55749f" />
        <path d="M5 14h6" strokeWidth="1.500" />
      </NavSvg>
    ),
  },
  {
    name: "Grid and Snaps",
    menu: true,
    icon: (
      <NavSvg>
        <path
          d="M1.500 1.500h13v13h-13ZM4.500 1.500v13M7 1.500v13M9.500 1.500v13M12 1.500v13M1.500 4.500h13M1.500 7h13M1.500 9.500h13M1.500 12h13"
          strokeWidth=".8"
          stroke="#555"
        />
      </NavSvg>
    ),
  },
  {
    name: "Viewports",
    menu: true,
    icon: (
      <NavSvg>
        <path d="M2 2.500h12.500v11H2Z" fill="#9dbbe4" stroke="#55688a" />
        <path d="M8.200 2.500v11M2 8h12.500" stroke="#3c4d6b" strokeWidth="1.300" />
      </NavSvg>
    ),
  },
];

function NavigationBar() {
  return (
    <div className="pointer-events-none absolute inset-x-0 bottom-[5px] pl-[44%]">
      <div className="pointer-events-auto flex h-[19px] w-fit items-center gap-0.5 bg-[#f1f1f1] px-px">
        {NAV_TOOLS.map((tool) => (
          <button
            key={tool.name}
            type="button"
            aria-label={tool.name}
            className={tool.menu ? "flex w-6 items-center gap-0.5" : "flex w-5 items-center justify-center"}
          >
            {tool.icon}
            {tool.menu && <Caret />}
          </button>
        ))}
      </div>
    </div>
  );
}

const FEATURE_ICONS: Record<string, (props: IconProps) => ReactNode> = {
  plane: OffsetPlaneIcon,
  canvas: CanvasIcon,
  sketch: EditSketchIcon,
  loft: LoftCutIcon,
  extrude: ExtrudeIcon,
  fillet: FilletIcon,
  angle: AnglePlaneIcon,
  combine: CombineFeatureIcon,
};

const FEATURES = [
  "plane", "plane", "canvas", "canvas", "plane", "plane", "canvas", "plane",
  "sketch", "plane", "sketch", "plane", "sketch", "plane", "sketch", "loft",
  "sketch", "extrude", "sketch", "sketch", "plane", "fillet", "angle", "sketch",
  "sketch", "combine", "angle", "sketch", "plane", "sketch", "combine", "sketch",
  "extrude", "sketch", "extrude", "fillet", "angle", "sketch", "plane", "sketch",
  "combine", "angle", "sketch", "plane", "sketch", "combine", "angle", "sketch",
  "plane",
];

function Timeline() {
  return (
    <footer className="flex h-8 shrink-0 overflow-hidden border-t-[6px] border-[#c9c9c9] bg-[#f1f1f1] pl-3">
      {FEATURES.map((feature, index) => {
        const Icon = FEATURE_ICONS[feature];
        return (
          <button
            key={index}
            type="button"
            aria-label={feature}
            className="flex w-5 shrink-0 flex-col items-center gap-[3px] pt-[7px]"
          >
            <Icon className="size-3.5 shrink-0" />
            <span className="h-0.5 w-px shrink-0 bg-[#999]" />
          </button>
        );
      })}
    </footer>
  );
}

export default function App() {
  return (
    <div className="flex h-screen flex-col overflow-hidden bg-white font-['Liberation_Sans',Arial,sans-serif]">
      <Toolbar />
      <main className="relative min-h-0 flex-1 overflow-hidden">
        <Scene />
        <BrowserTree />
        <div className="absolute bottom-[3px] left-0 flex h-[21px] w-[148px] items-center justify-end border border-l-0 border-[#cfcfcf] bg-[#f1f1f1] pr-[9px]">
          <RoundToggle open={false} label="Expand comments" />
        </div>
        <NavigationBar />
      </main>
      <Timeline />
    </div>
  );
}
